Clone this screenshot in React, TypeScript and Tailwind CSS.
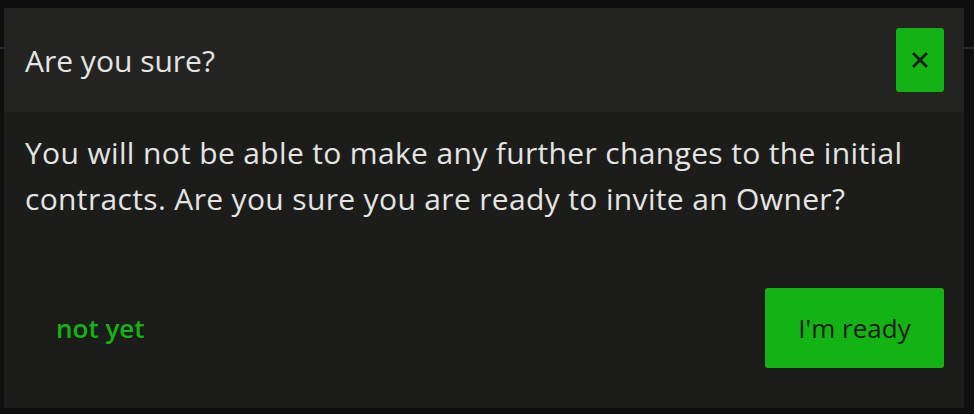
export default function App() {
  return (
    <div className="relative h-[414px] w-[974px] overflow-hidden bg-[#0e0f0e] pl-[4px] pt-[8px]" style={{ fontFamily: '"Open Sans", "Noto Sans", sans-serif' }}>
      {/* page behind the dialog */}
      <div className="absolute left-0 top-[47px] h-[2px] w-[4px] bg-[#2a2b29]" />
      <div className="absolute right-0 top-[47px] h-[2px] w-[10px] bg-[#2a2b29]" />

      <div className="relative flex h-[400px] w-[960px] flex-col bg-[#1c1d1b]">
        <div className="flex h-[104px] items-center justify-between bg-[#232422] pl-[21px] pr-[20px]">
          <h2 className="text-[30px] font-normal text-[#e4e4e2]">Are you sure?</h2>
          <button
            type="button"
            aria-label="Close"
            className="flex h-[64px] w-[48px] items-center justify-center rounded-[3px] bg-[#12b312]"
          >
            <svg width={16} height={16} viewBox="0 0 16 16" fill="none" stroke="#1b1c1a" strokeWidth={2.8} strokeLinecap="square">
              <path d="M2 2l12 12M14 2L2 14" />
            </svg>
          </button>
        </div>

        <div className="pl-[21px] pt-[18px]">
          <p className="w-[920px] text-[30px] leading-[46px] tracking-[0.35px] text-[#e4e4e2]">
            You will not be able to make any further changes to the initial contracts. Are you sure you are ready to invite an Owner?
          </p>
        </div>

        <div className="mt-auto flex items-center justify-between pb-[40px] pl-[52px] pr-[20px]">
          <button type="button" className="text-[26px] font-semibold text-[#12b312]">
            not yet
          </button>
          <button type="button" className="h-[80px] w-[179px] rounded-[3px] bg-[#12b312] text-[26px] text-[#1b1c1a]">
            I'm ready
          </button>
        </div>
      </div>
    </div>
  );
}
